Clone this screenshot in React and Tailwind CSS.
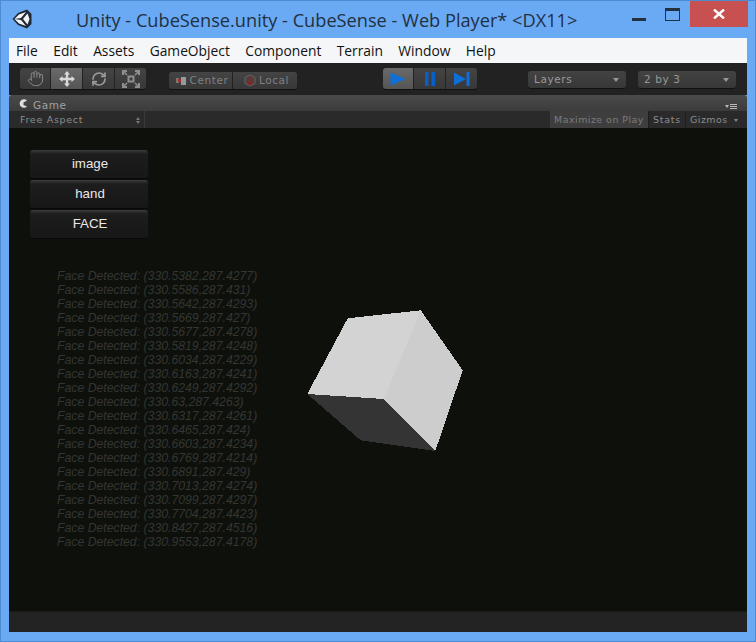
import { Hand, RefreshCw } from "lucide-react";

const menus = ["File", "Edit", "Assets", "GameObject", "Component", "Terrain", "Window", "Help"];

const logLines = [
  "330.5382,287.4277", "330.5586,287.431", "330.5642,287.4293", "330.5669,287.427",
  "330.5677,287.4278", "330.5819,287.4248", "330.6034,287.4229", "330.6163,287.4241",
  "330.6249,287.4292", "330.63,287.4263", "330.6317,287.4261", "330.6465,287.424",
  "330.6603,287.4234", "330.6769,287.4214", "330.6891,287.429", "330.7013,287.4274",
  "330.7099,287.4297", "330.7704,287.4423", "330.8427,287.4516", "330.9553,287.4178",
];

function UnityLogo() {
  return (
    <svg width="20" height="20" viewBox="0 0 20 20">
      <path d="M0.5 10L6 4L15 0.5L19.5 5L19.5 15L15 19.5L6 16Z" fill="#1f2a36" />
      <path d="M2.5 10L7 5.5L14 3L9 9Z" fill="#f5f5f5" />
      <path d="M2.5 10L9 11L14 17L7 14.5Z" fill="#f5f5f5" />
      <path d="M15.5 4.5L17.5 10L15.5 15.5L11 10Z" fill="#f5f5f5" />
    </svg>
  );
}

function MoveIcon() {
  return (
    <svg width="16" height="16" viewBox="0 0 16 16" fill="#d8d8d8">
      <path d="M8 0L11 3.5H9.2V6.8H12.5V5L16 8L12.5 11V9.2H9.2V12.5H11L8 16L5 12.5H6.8V9.2H3.5V11L0 8L3.5 5V6.8H6.8V3.5H5Z" />
    </svg>
  );
}

function ScaleIcon() {
  return (
    <svg width="18" height="18" viewBox="0 0 18 18" fill="none" stroke="#8f8f8f" strokeWidth="2">
      <rect x="6.5" y="6.5" width="5" height="5" />
      <path d="M1 5V1H5M13 1H17V5M17 13V17H13M5 17H1V13" />
      <path d="M2 2L5 5M16 2L13 5M16 16L13 13M2 16L5 13" strokeWidth="1.5" />
    </svg>
  );
}

function Segment({ active, className, children }) {
  return (
    <div
      className={`flex h-full items-center justify-center border-r border-[#222] last:border-r-0 ${
        active ? "bg-gradient-to-b from-[#6a6a6a] to-[#555]" : "bg-gradient-to-b from-[#444] to-[#383838]"
      } ${className}`}
    >
      {children}
    </div>
  );
}

function Popup({ label }) {
  return (
    <div className="flex h-[17px] w-[98px] items-center justify-between rounded-[3px] bg-gradient-to-b from-[#434343] to-[#373737] pl-[6px] pr-[7px] text-[#999] shadow-[0_1px_0_#111]">
      <span>{label}</span>
      <span className="h-0 w-0 border-x-[3px] border-t-[4px] border-x-transparent border-t-[#999]" />
    </div>
  );
}

function GameButton({ label }) {
  return (
    <button className="h-[29px] w-[118px] rounded-[3px] border-b border-[#080808] bg-gradient-to-b from-[#3c3c3c] from-[0%] via-[#1d1d1d] via-[14%] to-[#171717] pl-[2px] text-[13.3px] text-[#e8e8e8]">
      {label}
    </button>
  );
}

export default function App() {
  return (
    <div className="flex h-[642px] w-[756px] flex-col overflow-hidden border border-[#4f8bd0] bg-[#6aaaf5] font-['Liberation_Sans',sans-serif]">
      <div className="flex h-[37px] shrink-0 items-start">
        <div className="ml-[11px] mt-[8px]">
          <UnityLogo />
        </div>
        <div className="ml-[44px] mt-[7px] text-[18.2px] leading-[24px] text-[#22303f] font-['Open_Sans',sans-serif]">
          Unity - CubeSense.unity - CubeSense - Web Player* &lt;DX11&gt;
        </div>
        <div className="ml-auto mr-[7px] flex items-start">
          <div className="mr-[19px] mt-[17px] h-[3px] w-[14px] bg-[#22303f]" />
          <div className="mr-[10px] mt-[7px] h-[13px] w-[15px] border border-t-[3px] border-[#22303f]" />
          <div className="flex h-[26px] w-[58px] items-center justify-center bg-[#c75050] text-white">
            <svg width="12" height="10" viewBox="0 0 12 10" stroke="white" strokeWidth="2.4">
              <path d="M1 0.5L11 9.5M11 0.5L1 9.5" />
            </svg>
          </div>
        </div>
      </div>

      <div className="mx-[8px] flex min-h-0 flex-1 flex-col">
        <div className="flex h-[25px] shrink-0 items-center gap-[15.4px] bg-[#f5f6f8] pl-[7px] pt-[2px] text-[13.8px] text-[#111] font-['Open_Sans',sans-serif]">
          {menus.map((m) => (
            <span key={m}>{m}</span>
          ))}
        </div>

        <div className="flex h-[32px] shrink-0 items-start bg-[#222] pl-[11px] font-['DejaVu_Sans',sans-serif] text-[10.5px] tracking-[0.6px]">
          <div className="mt-[5px] flex h-[21px] overflow-hidden rounded-[3px] shadow-[0_1px_0_#111]">
            <Segment className="w-[31px]">
              <Hand size={17} color="#8a8a8a" strokeWidth={1.4} />
            </Segment>
            <Segment active className="w-[32px]">
              <MoveIcon />
            </Segment>
            <Segment className="w-[32px]">
              <RefreshCw size={16} color="#9a9a9a" strokeWidth={2.6} />
            </Segment>
            <Segment className="w-[31px]">
              <ScaleIcon />
            </Segment>
          </div>

          <div className="ml-[23px] mt-[9px] flex h-[17px] overflow-hidden rounded-[3px] text-[#808080] shadow-[0_1px_0_#111]">
            <Segment className="w-[64px] gap-[4px] pl-[3px]">
              <svg width="10" height="8" viewBox="0 0 10 8">
                <rect x="0" y="1" width="3" height="5" fill="#777" />
                <rect x="2" y="2" width="3" height="3" fill="#b02c2c" />
                <rect x="5" y="0" width="5" height="8" fill="#999" />
              </svg>
              <span>Center</span>
            </Segment>
            <Segment className="w-[64px] gap-[3px] pl-[3px]">
              <svg width="12" height="13" viewBox="0 0 12 13" fill="none">
                <path d="M6 1L11 3.5V9.5L6 12L1 9.5V3.5Z" fill="#4a4040" stroke="#666" />
                <path d="M2.5 7.5H9.5L6 12Z" fill="#8e2222" />
                <path d="M6 2.5V7" stroke="#8e2222" strokeWidth="1.4" />
              </svg>
              <span>Local</span>
            </Segment>
          </div>

          <div className="ml-[86px] mt-[5px] flex h-[21px] overflow-hidden rounded-[3px] shadow-[0_1px_0_#111]">
            <Segment active className="w-[31px]">
              <svg width="16" height="14" viewBox="0 0 16 14">
                <path d="M0.5 0.5L15.5 7L0.5 13.5Z" fill="#0e6fd8" />
              </svg>
            </Segment>
            <Segment className="w-[32px]">
              <svg width="10" height="14" viewBox="0 0 10 14" fill="#0a5fc4">
                <rect x="0" y="0" width="3.5" height="14" />
                <rect x="6.5" y="0" width="3.5" height="14" />
              </svg>
            </Segment>
            <Segment className="w-[31px]">
              <svg width="16" height="14" viewBox="0 0 16 14" fill="#0e6fd8">
                <path d="M0 0.5L12 7L0 13.5Z" />
                <rect x="12.5" y="0" width="3" height="14" />
              </svg>
            </Segment>
          </div>

          <div className="ml-[51px] mt-[8px]">
            <Popup label="Layers" />
          </div>
          <div className="ml-[12px] mt-[8px]">
            <Popup label="2 by 3" />
          </div>
        </div>

        <div className="relative flex h-[16px] shrink-0 items-center rounded-t-[3px] bg-gradient-to-b from-[#4a4a4a] to-[#3c3c3c] pl-[10px] pt-[6px] font-['DejaVu_Sans',sans-serif] text-[10.5px] tracking-[0.6px] text-[#a0a0a0]">
          <svg width="9" height="9" viewBox="0 0 9 9" className="mb-[6px]">
            <path d="M8 1.5A4.3 4.3 0 1 0 8 7.5L4.5 6V3.5Z" fill="#ddd" />
          </svg>
          <span className="ml-[5px]">Game</span>
          <div className="absolute right-[10px] top-[9px] flex items-center gap-[1px]">
            <span className="h-0 w-0 border-x-[2px] border-t-[3px] border-x-transparent border-t-[#bbb]" />
            <span className="flex w-[7px] flex-col gap-[1px]">
              <span className="h-[1px] bg-[#bbb]" />
              <span className="h-[1px] bg-[#bbb]" />
              <span className="h-[1px] bg-[#bbb]" />
            </span>
          </div>
        </div>

        <div className="flex h-[17px] shrink-0 items-stretch bg-[#2a2a2a] pl-[6px] pr-[6px] font-['DejaVu_Sans',sans-serif] text-[9.5px] tracking-[0.7px] text-[#8c8c8c]">
          <div className="flex w-[130px] items-center justify-between border-r border-[#3a3a3a] pl-[5px] pr-[4px] pt-[1px]">
            <span>Free Aspect</span>
            <span className="flex flex-col gap-[1px]">
              <span className="h-0 w-0 border-x-[2px] border-b-[3px] border-x-transparent border-b-[#777]" />
              <span className="h-0 w-0 border-x-[2px] border-t-[3px] border-x-transparent border-t-[#777]" />
            </span>
          </div>
          <div className="ml-auto flex w-[98px] items-center justify-center bg-[#3e3e3e] pt-[1px] tracking-[0.45px] text-[#7c7c7c]">Maximize on Play</div>
          <div className="flex w-[37px] items-center justify-center border-l border-[#1e1e1e] pt-[1px]">Stats</div>
          <div className="flex w-[56px] items-center border-l border-[#1e1e1e] pl-[4px] pt-[1px] tracking-[0.45px]">
            <span>Gizmos</span>
            <span className="ml-auto mr-[3px] h-0 w-0 border-x-[2px] border-t-[3px] border-x-transparent border-t-[#888]" />
          </div>
        </div>

        <div className="relative min-h-0 flex-1 bg-[#0e100c] pl-[21px] pt-[22px]">
          <div className="flex flex-col gap-[1px]">
            <GameButton label="image" />
            <GameButton label="hand" />
            <GameButton label="FACE" />
          </div>
          <div className="ml-[27px] mt-[30px] text-[12.25px] italic leading-[14px] text-[#343632]">
            {logLines.map((l) => (
              <div key={l}>Face Detected: ({l})</div>
            ))}
          </div>
          <svg className="absolute left-[289px] top-[175px]" width="170" height="150" viewBox="298 303 170 150" shapeRendering="crispEdges">
            <path d="M347.7 318.3L420.7 310.3L462.7 370.3L435.3 451L384 399L307.3 394Z" fill="#cdcdcd" />
            <path d="M347.7 318.3L420.7 310.3L384 399L307.3 394Z" fill="#d3d3d3" />
            <path d="M307.3 394L384 399L435.3 451L360.7 440.3Z" fill="#343434" />
          </svg>
        </div>

        <div className="h-[21px] shrink-0 border-t border-[#1a1a1a] bg-[#232323]" />
      </div>

      <div className="h-[9px] shrink-0" />
    </div>
  );
}
